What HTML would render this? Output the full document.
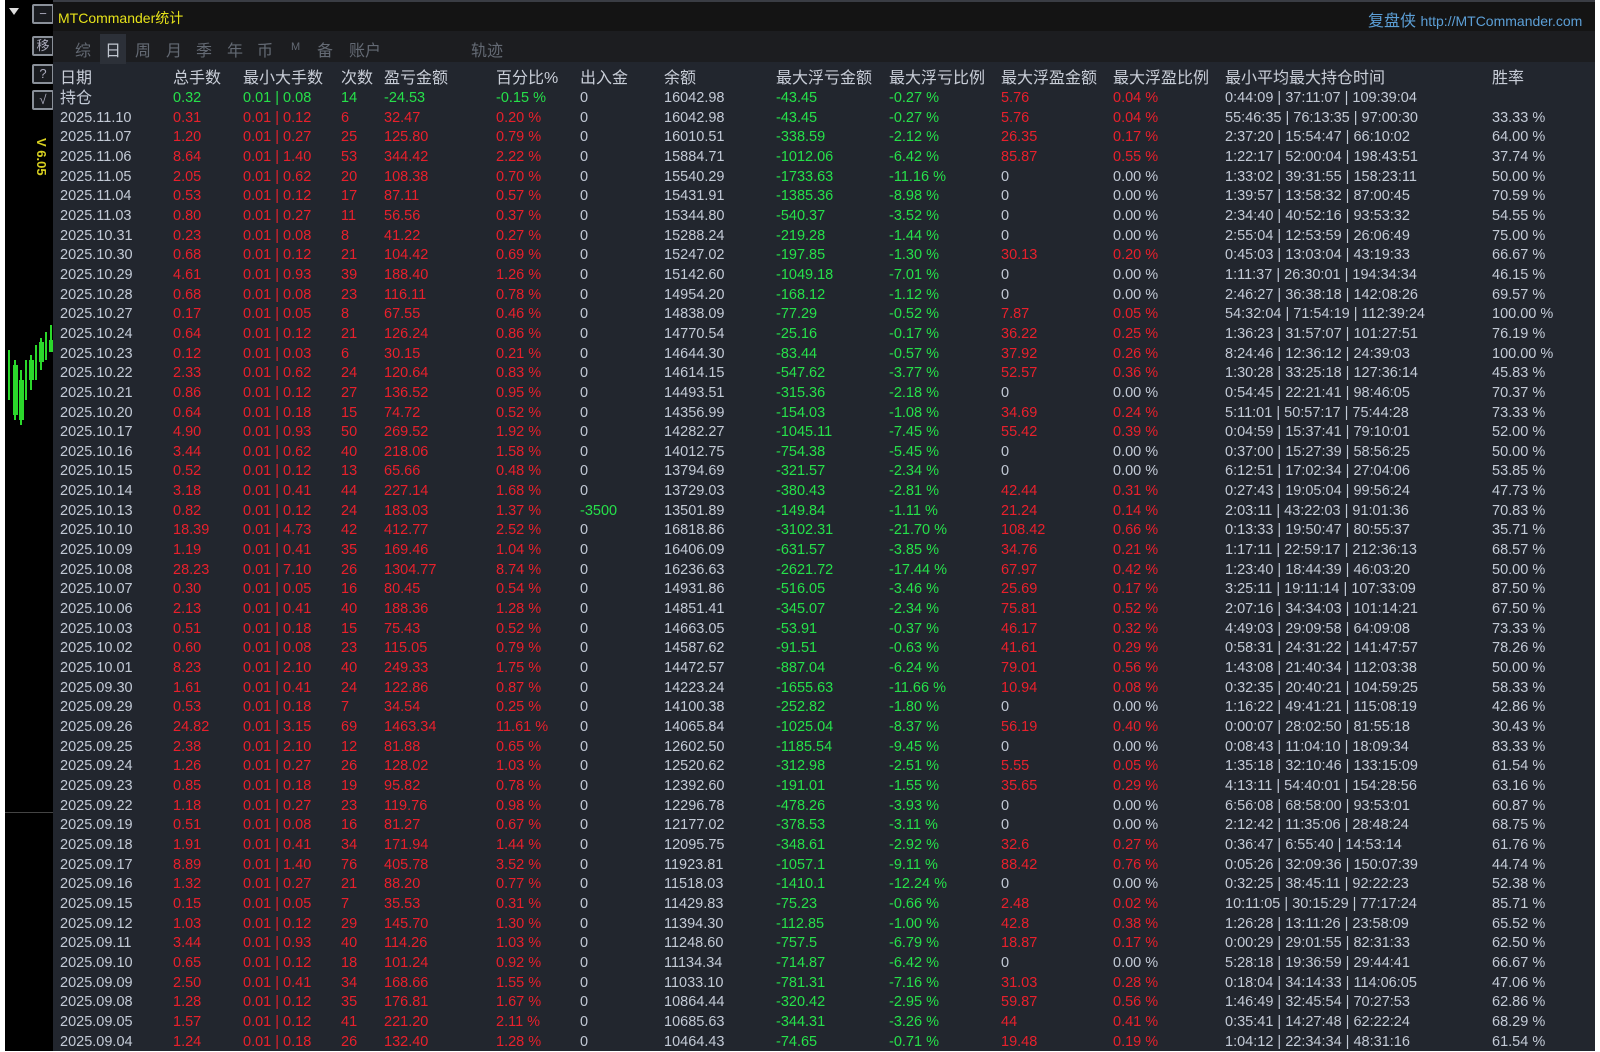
<!DOCTYPE html>
<html><head><meta charset="utf-8"><style>
*{margin:0;padding:0;box-sizing:border-box}
body{width:1600px;height:1051px;background:#fff;position:relative;overflow:hidden;font-family:"Liberation Sans","Noto Sans CJK SC",sans-serif}
#strip{position:absolute;left:5px;top:0;width:48px;height:1051px;background:#000}
#panel{position:absolute;left:53px;top:0;width:1542px;height:1051px;background:#22262e}
#top{position:absolute;left:0;top:0;width:1542px;height:31px;background:#141414;border-top:2px solid #3a3d44}
#tabs{position:absolute;left:0;top:31px;width:1542px;height:31px;background:#1c1d20}
.t{position:absolute;top:6px;font-size:16px;color:#646a74}
.ic{position:absolute;left:27px;width:22px;height:20px;border:2px solid #8a9099;border-radius:2px;color:#aab;font-size:13px;text-align:center;line-height:16px;background:#1a1c20}
#head{position:absolute;left:0;top:69px;height:20px;line-height:20px;width:1542px;font-size:16px;color:#c9ced8}
#head span,.r span{position:absolute;white-space:pre}
.r{position:relative;height:19.66px;line-height:19.66px;font-size:14.5px}
#rows{position:absolute;left:0;top:89px;width:1542px}
.c1{left:7px}.c2{left:120px}.c3{left:190px}.c4{left:288px}.c5{left:331px}.c6{left:443px}.c7{left:527px}.c8{left:611px}.c9{left:723px}.c10{left:836px}.c11{left:948px}.c12{left:1060px}.c13{left:1172px}.c14{left:1439px}
.r span:nth-child(1){left:7px;color:#c3cad6}
.r span:nth-child(2){left:120px;color:#e8202c}
.r span:nth-child(3){left:190px;color:#e8202c}
.r span:nth-child(4){left:288px;color:#e8202c}
.r span:nth-child(5){left:331px;color:#e8202c}
.r span:nth-child(6){left:443px;color:#e8202c}
.r span:nth-child(7){left:527px;color:#c3cad6}
.r span:nth-child(8){left:611px;color:#c3cad6}
.r span:nth-child(9){left:723px;color:#26e04a}
.r span:nth-child(10){left:836px;color:#26e04a}
.r span:nth-child(11){left:948px;color:#e8202c}
.r span:nth-child(12){left:1060px;color:#e8202c}
.r span:nth-child(13){left:1172px;color:#c3cad6}
.r span:nth-child(14){left:1439px;color:#c3cad6}
.r span.z{color:#c3cad6}
.r span.g{color:#26e04a}
#rows .r:first-child span:nth-child(1){font-size:16px}
</style></head><body>
<div id="strip">
<div style="position:absolute;left:4px;top:8px;width:0;height:0;border-left:5px solid transparent;border-right:5px solid transparent;border-top:7px solid #ddd"></div>
<div class="ic" style="top:4px">−</div>
<div class="ic" style="top:36px">移</div>
<div class="ic" style="top:64px">?</div>
<div class="ic" style="top:90px">√</div>
<div style="position:absolute;top:138px;transform:rotate(90deg);transform-origin:left top;left:44px;color:#d8d020;font-size:13px;font-weight:bold;white-space:nowrap">V 6.05</div>
<svg style="position:absolute;left:0;top:320px" width="48" height="110"><g stroke="#2bd82b" stroke-width="2"><line x1="4" y1="30" x2="4" y2="80"/><line x1="10" y1="40" x2="10" y2="100"/><line x1="16" y1="50" x2="16" y2="105"/><line x1="21" y1="40" x2="21" y2="80"/><line x1="26" y1="35" x2="26" y2="70"/><line x1="31" y1="25" x2="31" y2="60"/><line x1="36" y1="18" x2="36" y2="50"/><line x1="41" y1="12" x2="41" y2="40"/><line x1="46" y1="5" x2="46" y2="30"/></g><g fill="#2bd82b"><rect x="8" y="45" width="5" height="50"/><rect x="14" y="60" width="5" height="40"/><rect x="24" y="40" width="5" height="20"/><rect x="34" y="22" width="5" height="20"/><rect x="44" y="20" width="4" height="12"/></g></svg>
<div style="position:absolute;left:0;top:812px;width:48px;height:1px;background:#444"></div>
</div>
<div id="panel">
<div id="top">
<div style="position:absolute;left:5px;top:6px;color:#e6e21a;font-size:14px">MTCommander统计</div>
<div style="position:absolute;left:1315px;top:5px;color:#5c9fd6;font-size:16px">复盘侠 <span style="font-size:14px">http://MTCommander.com</span></div>
</div>
<div id="tabs">
<span class="t" style="left:22px">综</span>
<span class="t" style="left:47px;top:3px;background:#2c3038;color:#c0c6d0;padding:3px 5px">日</span>
<span class="t" style="left:82px">周</span>
<span class="t" style="left:113px">月</span>
<span class="t" style="left:143px">季</span>
<span class="t" style="left:174px">年</span>
<span class="t" style="left:204px">币</span>
<span class="t" style="left:238px;font-size:11px;top:10px">M</span>
<span class="t" style="left:264px">备</span>
<span class="t" style="left:296px">账户</span>
<span class="t" style="left:418px">轨迹</span>
</div>
<div id="head">
<span class="c1">日期</span><span class="c2">总手数</span><span class="c3">最小大手数</span><span class="c4">次数</span><span class="c5">盈亏金额</span><span class="c6">百分比%</span><span class="c7">出入金</span><span class="c8">余额</span><span class="c9">最大浮亏金额</span><span class="c10">最大浮亏比例</span><span class="c11">最大浮盈金额</span><span class="c12">最大浮盈比例</span><span class="c13">最小平均最大持仓时间</span><span class="c14">胜率</span>
</div>
<div id="rows">
<div class="r"><span>持仓</span><span class="g">0.32</span><span class="g">0.01 | 0.08</span><span class="g">14</span><span class="g">-24.53</span><span class="g">-0.15 %</span><span>0</span><span>16042.98</span><span>-43.45</span><span>-0.27 %</span><span>5.76</span><span>0.04 %</span><span>0:44:09 | 37:11:07 | 109:39:04</span><span></span></div>
<div class="r"><span>2025.11.10</span><span>0.31</span><span>0.01 | 0.12</span><span>6</span><span>32.47</span><span>0.20 %</span><span>0</span><span>16042.98</span><span>-43.45</span><span>-0.27 %</span><span>5.76</span><span>0.04 %</span><span>55:46:35 | 76:13:35 | 97:00:30</span><span>33.33 %</span></div>
<div class="r"><span>2025.11.07</span><span>1.20</span><span>0.01 | 0.27</span><span>25</span><span>125.80</span><span>0.79 %</span><span>0</span><span>16010.51</span><span>-338.59</span><span>-2.12 %</span><span>26.35</span><span>0.17 %</span><span>2:37:20 | 15:54:47 | 66:10:02</span><span>64.00 %</span></div>
<div class="r"><span>2025.11.06</span><span>8.64</span><span>0.01 | 1.40</span><span>53</span><span>344.42</span><span>2.22 %</span><span>0</span><span>15884.71</span><span>-1012.06</span><span>-6.42 %</span><span>85.87</span><span>0.55 %</span><span>1:22:17 | 52:00:04 | 198:43:51</span><span>37.74 %</span></div>
<div class="r"><span>2025.11.05</span><span>2.05</span><span>0.01 | 0.62</span><span>20</span><span>108.38</span><span>0.70 %</span><span>0</span><span>15540.29</span><span>-1733.63</span><span>-11.16 %</span><span class="z">0</span><span class="z">0.00 %</span><span>1:33:02 | 39:31:55 | 158:23:11</span><span>50.00 %</span></div>
<div class="r"><span>2025.11.04</span><span>0.53</span><span>0.01 | 0.12</span><span>17</span><span>87.11</span><span>0.57 %</span><span>0</span><span>15431.91</span><span>-1385.36</span><span>-8.98 %</span><span class="z">0</span><span class="z">0.00 %</span><span>1:39:57 | 13:58:32 | 87:00:45</span><span>70.59 %</span></div>
<div class="r"><span>2025.11.03</span><span>0.80</span><span>0.01 | 0.27</span><span>11</span><span>56.56</span><span>0.37 %</span><span>0</span><span>15344.80</span><span>-540.37</span><span>-3.52 %</span><span class="z">0</span><span class="z">0.00 %</span><span>2:34:40 | 40:52:16 | 93:53:32</span><span>54.55 %</span></div>
<div class="r"><span>2025.10.31</span><span>0.23</span><span>0.01 | 0.08</span><span>8</span><span>41.22</span><span>0.27 %</span><span>0</span><span>15288.24</span><span>-219.28</span><span>-1.44 %</span><span class="z">0</span><span class="z">0.00 %</span><span>2:55:04 | 12:53:59 | 26:06:49</span><span>75.00 %</span></div>
<div class="r"><span>2025.10.30</span><span>0.68</span><span>0.01 | 0.12</span><span>21</span><span>104.42</span><span>0.69 %</span><span>0</span><span>15247.02</span><span>-197.85</span><span>-1.30 %</span><span>30.13</span><span>0.20 %</span><span>0:45:03 | 13:03:04 | 43:19:33</span><span>66.67 %</span></div>
<div class="r"><span>2025.10.29</span><span>4.61</span><span>0.01 | 0.93</span><span>39</span><span>188.40</span><span>1.26 %</span><span>0</span><span>15142.60</span><span>-1049.18</span><span>-7.01 %</span><span class="z">0</span><span class="z">0.00 %</span><span>1:11:37 | 26:30:01 | 194:34:34</span><span>46.15 %</span></div>
<div class="r"><span>2025.10.28</span><span>0.68</span><span>0.01 | 0.08</span><span>23</span><span>116.11</span><span>0.78 %</span><span>0</span><span>14954.20</span><span>-168.12</span><span>-1.12 %</span><span class="z">0</span><span class="z">0.00 %</span><span>2:46:27 | 36:38:18 | 142:08:26</span><span>69.57 %</span></div>
<div class="r"><span>2025.10.27</span><span>0.17</span><span>0.01 | 0.05</span><span>8</span><span>67.55</span><span>0.46 %</span><span>0</span><span>14838.09</span><span>-77.29</span><span>-0.52 %</span><span>7.87</span><span>0.05 %</span><span>54:32:04 | 71:54:19 | 112:39:24</span><span>100.00 %</span></div>
<div class="r"><span>2025.10.24</span><span>0.64</span><span>0.01 | 0.12</span><span>21</span><span>126.24</span><span>0.86 %</span><span>0</span><span>14770.54</span><span>-25.16</span><span>-0.17 %</span><span>36.22</span><span>0.25 %</span><span>1:36:23 | 31:57:07 | 101:27:51</span><span>76.19 %</span></div>
<div class="r"><span>2025.10.23</span><span>0.12</span><span>0.01 | 0.03</span><span>6</span><span>30.15</span><span>0.21 %</span><span>0</span><span>14644.30</span><span>-83.44</span><span>-0.57 %</span><span>37.92</span><span>0.26 %</span><span>8:24:46 | 12:36:12 | 24:39:03</span><span>100.00 %</span></div>
<div class="r"><span>2025.10.22</span><span>2.33</span><span>0.01 | 0.62</span><span>24</span><span>120.64</span><span>0.83 %</span><span>0</span><span>14614.15</span><span>-547.62</span><span>-3.77 %</span><span>52.57</span><span>0.36 %</span><span>1:30:28 | 33:25:18 | 127:36:14</span><span>45.83 %</span></div>
<div class="r"><span>2025.10.21</span><span>0.86</span><span>0.01 | 0.12</span><span>27</span><span>136.52</span><span>0.95 %</span><span>0</span><span>14493.51</span><span>-315.36</span><span>-2.18 %</span><span class="z">0</span><span class="z">0.00 %</span><span>0:54:45 | 22:21:41 | 98:46:05</span><span>70.37 %</span></div>
<div class="r"><span>2025.10.20</span><span>0.64</span><span>0.01 | 0.18</span><span>15</span><span>74.72</span><span>0.52 %</span><span>0</span><span>14356.99</span><span>-154.03</span><span>-1.08 %</span><span>34.69</span><span>0.24 %</span><span>5:11:01 | 50:57:17 | 75:44:28</span><span>73.33 %</span></div>
<div class="r"><span>2025.10.17</span><span>4.90</span><span>0.01 | 0.93</span><span>50</span><span>269.52</span><span>1.92 %</span><span>0</span><span>14282.27</span><span>-1045.11</span><span>-7.45 %</span><span>55.42</span><span>0.39 %</span><span>0:04:59 | 15:37:41 | 79:10:01</span><span>52.00 %</span></div>
<div class="r"><span>2025.10.16</span><span>3.44</span><span>0.01 | 0.62</span><span>40</span><span>218.06</span><span>1.58 %</span><span>0</span><span>14012.75</span><span>-754.38</span><span>-5.45 %</span><span class="z">0</span><span class="z">0.00 %</span><span>0:37:00 | 15:27:39 | 58:56:25</span><span>50.00 %</span></div>
<div class="r"><span>2025.10.15</span><span>0.52</span><span>0.01 | 0.12</span><span>13</span><span>65.66</span><span>0.48 %</span><span>0</span><span>13794.69</span><span>-321.57</span><span>-2.34 %</span><span class="z">0</span><span class="z">0.00 %</span><span>6:12:51 | 17:02:34 | 27:04:06</span><span>53.85 %</span></div>
<div class="r"><span>2025.10.14</span><span>3.18</span><span>0.01 | 0.41</span><span>44</span><span>227.14</span><span>1.68 %</span><span>0</span><span>13729.03</span><span>-380.43</span><span>-2.81 %</span><span>42.44</span><span>0.31 %</span><span>0:27:43 | 19:05:04 | 99:56:24</span><span>47.73 %</span></div>
<div class="r"><span>2025.10.13</span><span>0.82</span><span>0.01 | 0.12</span><span>24</span><span>183.03</span><span>1.37 %</span><span class="g">-3500</span><span>13501.89</span><span>-149.84</span><span>-1.11 %</span><span>21.24</span><span>0.14 %</span><span>2:03:11 | 43:22:03 | 91:01:36</span><span>70.83 %</span></div>
<div class="r"><span>2025.10.10</span><span>18.39</span><span>0.01 | 4.73</span><span>42</span><span>412.77</span><span>2.52 %</span><span>0</span><span>16818.86</span><span>-3102.31</span><span>-21.70 %</span><span>108.42</span><span>0.66 %</span><span>0:13:33 | 19:50:47 | 80:55:37</span><span>35.71 %</span></div>
<div class="r"><span>2025.10.09</span><span>1.19</span><span>0.01 | 0.41</span><span>35</span><span>169.46</span><span>1.04 %</span><span>0</span><span>16406.09</span><span>-631.57</span><span>-3.85 %</span><span>34.76</span><span>0.21 %</span><span>1:17:11 | 22:59:17 | 212:36:13</span><span>68.57 %</span></div>
<div class="r"><span>2025.10.08</span><span>28.23</span><span>0.01 | 7.10</span><span>26</span><span>1304.77</span><span>8.74 %</span><span>0</span><span>16236.63</span><span>-2621.72</span><span>-17.44 %</span><span>67.97</span><span>0.42 %</span><span>1:23:40 | 18:44:39 | 46:03:20</span><span>50.00 %</span></div>
<div class="r"><span>2025.10.07</span><span>0.30</span><span>0.01 | 0.05</span><span>16</span><span>80.45</span><span>0.54 %</span><span>0</span><span>14931.86</span><span>-516.05</span><span>-3.46 %</span><span>25.69</span><span>0.17 %</span><span>3:25:11 | 19:11:14 | 107:33:09</span><span>87.50 %</span></div>
<div class="r"><span>2025.10.06</span><span>2.13</span><span>0.01 | 0.41</span><span>40</span><span>188.36</span><span>1.28 %</span><span>0</span><span>14851.41</span><span>-345.07</span><span>-2.34 %</span><span>75.81</span><span>0.52 %</span><span>2:07:16 | 34:34:03 | 101:14:21</span><span>67.50 %</span></div>
<div class="r"><span>2025.10.03</span><span>0.51</span><span>0.01 | 0.18</span><span>15</span><span>75.43</span><span>0.52 %</span><span>0</span><span>14663.05</span><span>-53.91</span><span>-0.37 %</span><span>46.17</span><span>0.32 %</span><span>4:49:03 | 29:09:58 | 64:09:08</span><span>73.33 %</span></div>
<div class="r"><span>2025.10.02</span><span>0.60</span><span>0.01 | 0.08</span><span>23</span><span>115.05</span><span>0.79 %</span><span>0</span><span>14587.62</span><span>-91.51</span><span>-0.63 %</span><span>41.61</span><span>0.29 %</span><span>0:58:31 | 24:31:22 | 141:47:57</span><span>78.26 %</span></div>
<div class="r"><span>2025.10.01</span><span>8.23</span><span>0.01 | 2.10</span><span>40</span><span>249.33</span><span>1.75 %</span><span>0</span><span>14472.57</span><span>-887.04</span><span>-6.24 %</span><span>79.01</span><span>0.56 %</span><span>1:43:08 | 21:40:34 | 112:03:38</span><span>50.00 %</span></div>
<div class="r"><span>2025.09.30</span><span>1.61</span><span>0.01 | 0.41</span><span>24</span><span>122.86</span><span>0.87 %</span><span>0</span><span>14223.24</span><span>-1655.63</span><span>-11.66 %</span><span>10.94</span><span>0.08 %</span><span>0:32:35 | 20:40:21 | 104:59:25</span><span>58.33 %</span></div>
<div class="r"><span>2025.09.29</span><span>0.53</span><span>0.01 | 0.18</span><span>7</span><span>34.54</span><span>0.25 %</span><span>0</span><span>14100.38</span><span>-252.82</span><span>-1.80 %</span><span class="z">0</span><span class="z">0.00 %</span><span>1:16:22 | 49:41:21 | 115:08:19</span><span>42.86 %</span></div>
<div class="r"><span>2025.09.26</span><span>24.82</span><span>0.01 | 3.15</span><span>69</span><span>1463.34</span><span>11.61 %</span><span>0</span><span>14065.84</span><span>-1025.04</span><span>-8.37 %</span><span>56.19</span><span>0.40 %</span><span>0:00:07 | 28:02:50 | 81:55:18</span><span>30.43 %</span></div>
<div class="r"><span>2025.09.25</span><span>2.38</span><span>0.01 | 2.10</span><span>12</span><span>81.88</span><span>0.65 %</span><span>0</span><span>12602.50</span><span>-1185.54</span><span>-9.45 %</span><span class="z">0</span><span class="z">0.00 %</span><span>0:08:43 | 11:04:10 | 18:09:34</span><span>83.33 %</span></div>
<div class="r"><span>2025.09.24</span><span>1.26</span><span>0.01 | 0.27</span><span>26</span><span>128.02</span><span>1.03 %</span><span>0</span><span>12520.62</span><span>-312.98</span><span>-2.51 %</span><span>5.55</span><span>0.05 %</span><span>1:35:18 | 32:10:46 | 133:15:09</span><span>61.54 %</span></div>
<div class="r"><span>2025.09.23</span><span>0.85</span><span>0.01 | 0.18</span><span>19</span><span>95.82</span><span>0.78 %</span><span>0</span><span>12392.60</span><span>-191.01</span><span>-1.55 %</span><span>35.65</span><span>0.29 %</span><span>4:13:11 | 54:40:01 | 154:28:56</span><span>63.16 %</span></div>
<div class="r"><span>2025.09.22</span><span>1.18</span><span>0.01 | 0.27</span><span>23</span><span>119.76</span><span>0.98 %</span><span>0</span><span>12296.78</span><span>-478.26</span><span>-3.93 %</span><span class="z">0</span><span class="z">0.00 %</span><span>6:56:08 | 68:58:00 | 93:53:01</span><span>60.87 %</span></div>
<div class="r"><span>2025.09.19</span><span>0.51</span><span>0.01 | 0.08</span><span>16</span><span>81.27</span><span>0.67 %</span><span>0</span><span>12177.02</span><span>-378.53</span><span>-3.11 %</span><span class="z">0</span><span class="z">0.00 %</span><span>2:12:42 | 11:35:06 | 28:48:24</span><span>68.75 %</span></div>
<div class="r"><span>2025.09.18</span><span>1.91</span><span>0.01 | 0.41</span><span>34</span><span>171.94</span><span>1.44 %</span><span>0</span><span>12095.75</span><span>-348.61</span><span>-2.92 %</span><span>32.6</span><span>0.27 %</span><span>0:36:47 | 6:55:40 | 14:53:14</span><span>61.76 %</span></div>
<div class="r"><span>2025.09.17</span><span>8.89</span><span>0.01 | 1.40</span><span>76</span><span>405.78</span><span>3.52 %</span><span>0</span><span>11923.81</span><span>-1057.1</span><span>-9.11 %</span><span>88.42</span><span>0.76 %</span><span>0:05:26 | 32:09:36 | 150:07:39</span><span>44.74 %</span></div>
<div class="r"><span>2025.09.16</span><span>1.32</span><span>0.01 | 0.27</span><span>21</span><span>88.20</span><span>0.77 %</span><span>0</span><span>11518.03</span><span>-1410.1</span><span>-12.24 %</span><span class="z">0</span><span class="z">0.00 %</span><span>0:32:25 | 38:45:11 | 92:22:23</span><span>52.38 %</span></div>
<div class="r"><span>2025.09.15</span><span>0.15</span><span>0.01 | 0.05</span><span>7</span><span>35.53</span><span>0.31 %</span><span>0</span><span>11429.83</span><span>-75.23</span><span>-0.66 %</span><span>2.48</span><span>0.02 %</span><span>10:11:05 | 30:15:29 | 77:17:24</span><span>85.71 %</span></div>
<div class="r"><span>2025.09.12</span><span>1.03</span><span>0.01 | 0.12</span><span>29</span><span>145.70</span><span>1.30 %</span><span>0</span><span>11394.30</span><span>-112.85</span><span>-1.00 %</span><span>42.8</span><span>0.38 %</span><span>1:26:28 | 13:11:26 | 23:58:09</span><span>65.52 %</span></div>
<div class="r"><span>2025.09.11</span><span>3.44</span><span>0.01 | 0.93</span><span>40</span><span>114.26</span><span>1.03 %</span><span>0</span><span>11248.60</span><span>-757.5</span><span>-6.79 %</span><span>18.87</span><span>0.17 %</span><span>0:00:29 | 29:01:55 | 82:31:33</span><span>62.50 %</span></div>
<div class="r"><span>2025.09.10</span><span>0.65</span><span>0.01 | 0.12</span><span>18</span><span>101.24</span><span>0.92 %</span><span>0</span><span>11134.34</span><span>-714.87</span><span>-6.42 %</span><span class="z">0</span><span class="z">0.00 %</span><span>5:28:18 | 19:36:59 | 29:44:41</span><span>66.67 %</span></div>
<div class="r"><span>2025.09.09</span><span>2.50</span><span>0.01 | 0.41</span><span>34</span><span>168.66</span><span>1.55 %</span><span>0</span><span>11033.10</span><span>-781.31</span><span>-7.16 %</span><span>31.03</span><span>0.28 %</span><span>0:18:04 | 34:14:33 | 114:06:05</span><span>47.06 %</span></div>
<div class="r"><span>2025.09.08</span><span>1.28</span><span>0.01 | 0.12</span><span>35</span><span>176.81</span><span>1.67 %</span><span>0</span><span>10864.44</span><span>-320.42</span><span>-2.95 %</span><span>59.87</span><span>0.56 %</span><span>1:46:49 | 32:45:54 | 70:27:53</span><span>62.86 %</span></div>
<div class="r"><span>2025.09.05</span><span>1.57</span><span>0.01 | 0.12</span><span>41</span><span>221.20</span><span>2.11 %</span><span>0</span><span>10685.63</span><span>-344.31</span><span>-3.26 %</span><span>44</span><span>0.41 %</span><span>0:35:41 | 14:27:48 | 62:22:24</span><span>68.29 %</span></div>
<div class="r"><span>2025.09.04</span><span>1.24</span><span>0.01 | 0.18</span><span>26</span><span>132.40</span><span>1.28 %</span><span>0</span><span>10464.43</span><span>-74.65</span><span>-0.71 %</span><span>19.48</span><span>0.19 %</span><span>1:04:12 | 22:34:34 | 48:31:16</span><span>61.54 %</span></div>
</div>
</div>
</body></html>
